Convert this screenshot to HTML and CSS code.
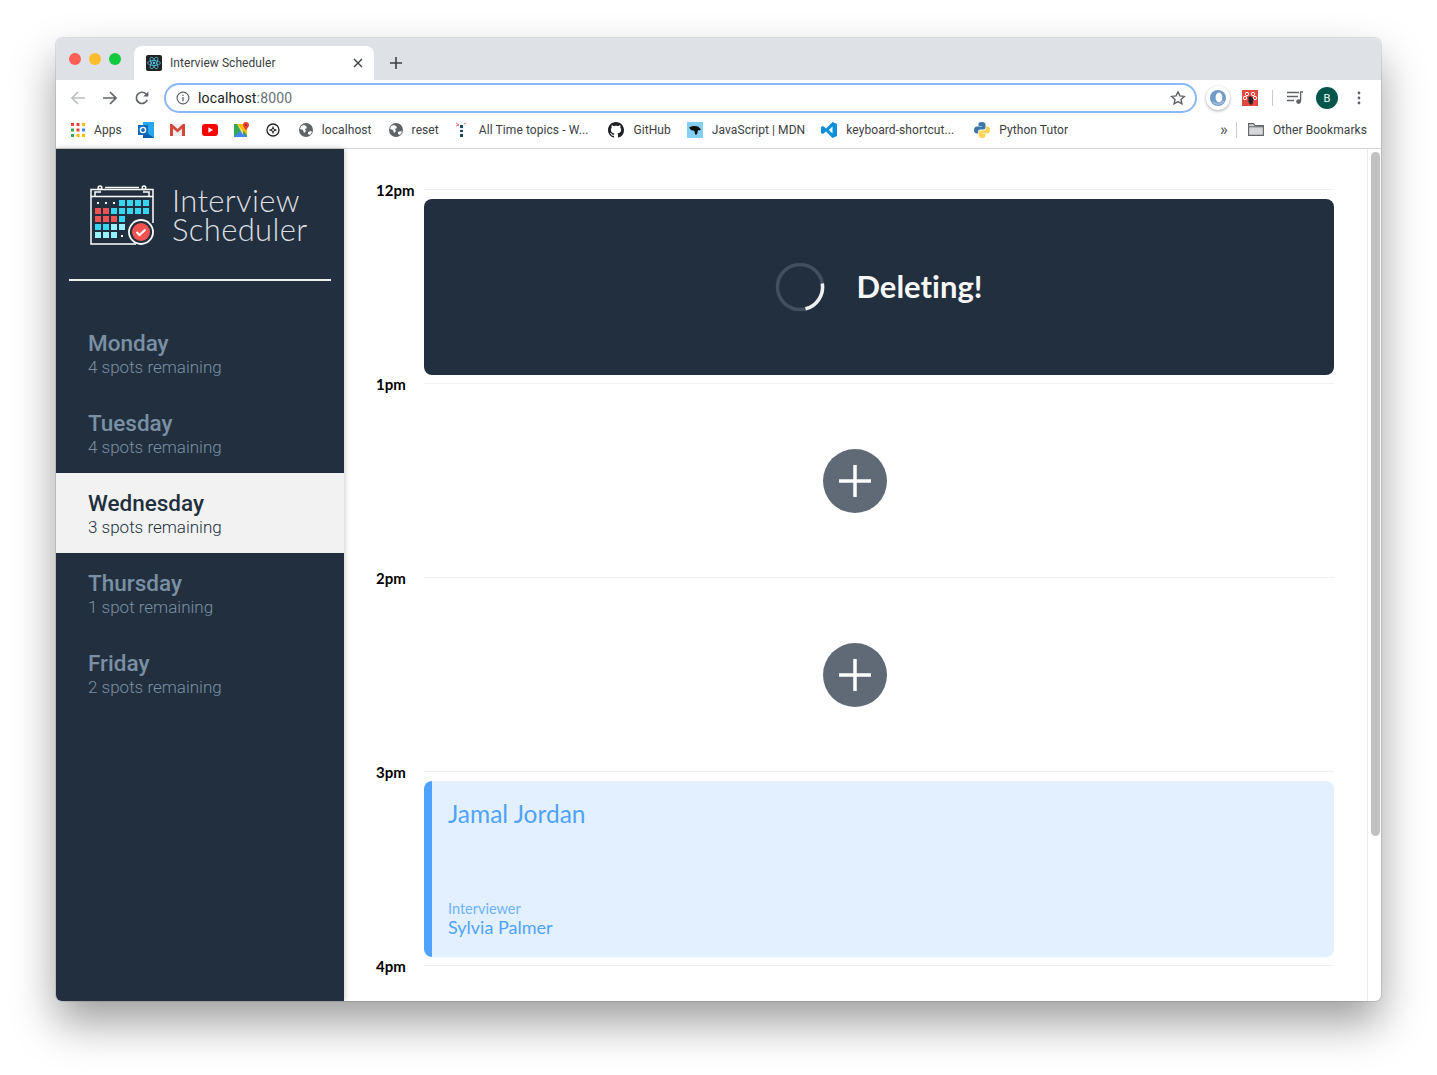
FILE: index.html
```html
<!DOCTYPE html>
<html>
  <head>
    <title>Interview Scheduler</title>
    <link rel="stylesheet" href="styles.css">
  </head>
  <body>
    <div class="window">
      <div class="tabstrip">
        <div class="lights">
          <span class="light red"></span>
          <span class="light yellow"></span>
          <span class="light green"></span>
        </div>
        <div class="tab">
          <svg class="favicon" width="16" height="16" viewBox="0 0 16 16">
            <rect width="16" height="16" rx="2" fill="#222"/>
            <g fill="none" stroke="#53c1de" stroke-width=".8">
              <ellipse cx="8" cy="8" rx="6.4" ry="2.5"/>
              <ellipse cx="8" cy="8" rx="6.4" ry="2.5" transform="rotate(60 8 8)"/>
              <ellipse cx="8" cy="8" rx="6.4" ry="2.5" transform="rotate(120 8 8)"/>
            </g>
            <circle cx="8" cy="8" r="1.3" fill="#53c1de"/>
          </svg>
          <span class="tab-title">Interview Scheduler</span>
          <svg class="tab-close" width="10" height="10" viewBox="0 0 10 10"><path d="M1 1l8 8M9 1l-8 8" stroke="#3c4043" stroke-width="1.4"/></svg>
        </div>
        <svg class="new-tab" width="12" height="12" viewBox="0 0 12 12"><path d="M6 0v12M0 6h12" stroke="#3c4043" stroke-width="1.6"/></svg>
      </div>

      <div class="toolbar">
        <svg class="nav-icon" width="16" height="16" viewBox="0 0 16 16"><path d="M15 8H2M8 2L2 8l6 6" fill="none" stroke="#bcbfc3" stroke-width="1.7"/></svg>
        <svg class="nav-icon" width="16" height="16" viewBox="0 0 16 16"><path d="M1 8h13M8 2l6 6-6 6" fill="none" stroke="#5f6368" stroke-width="1.7"/></svg>
        <svg class="nav-icon" width="16" height="16" viewBox="0 0 16 16"><path d="M13.2 9.8A5.6 5.6 0 1 1 12 4" fill="none" stroke="#5f6368" stroke-width="1.7"/><path d="M14.4 1.4v5.2H9.2z" fill="#5f6368"/></svg>
        <div class="omnibox">
          <svg width="14" height="14" viewBox="0 0 14 14"><circle cx="7" cy="7" r="5.9" fill="none" stroke="#5f6368" stroke-width="1.2"/><path d="M7 6v4.2" stroke="#5f6368" stroke-width="1.3"/><circle cx="7" cy="4.2" r=".8" fill="#5f6368"/></svg>
          <span class="url"><span class="host">localhost</span>:8000</span>
          <svg class="star" width="16" height="16" viewBox="0 0 16 16"><path d="M8 1.8l1.9 4.1 4.4.5-3.3 3 .9 4.4L8 11.6l-3.9 2.2.9-4.4-3.3-3 4.4-.5z" fill="none" stroke="#5f6368" stroke-width="1.4"/></svg>
        </div>
        <div class="ext-bubble">
          <svg width="18" height="18" viewBox="0 0 18 18"><circle cx="9" cy="9" r="8" fill="#6f9cc9"/><ellipse cx="10" cy="8.500" rx="3.400" ry="5" fill="#fff"/><path d="M4 13c3 3 8 3 11-1" fill="none" stroke="#a9c4df" stroke-width="1.500"/></svg>
        </div>
        <svg class="ext-bug" width="16" height="16" viewBox="0 0 16 16"><rect width="16" height="16" fill="#e5483f"/><g fill="none" stroke="#fff" stroke-width="1"><circle cx="5" cy="4" r="1.700"/><circle cx="11" cy="4" r="1.700"/><circle cx="3" cy="8" r="1.700"/><circle cx="13" cy="8" r="1.700"/></g><path d="M6.500 7l2-1 3 3-1 5-2 1-2-3z" fill="#222"/></svg>
        <span class="tool-sep"></span>
        <svg class="media" width="16" height="14" viewBox="0 0 16 14"><path d="M0 1.5h12M0 5.5h11M0 9.5h7" stroke="#5f6368" stroke-width="1.4"/><path d="M13.6 1v9" stroke="#5f6368" stroke-width="1.4"/><path d="M13 1h3" stroke="#5f6368" stroke-width="1.4"/><circle cx="11.6" cy="10.6" r="2.4" fill="#5f6368"/></svg>
        <span class="avatar">B</span>
        <svg class="kebab" width="4" height="14" viewBox="0 0 4 14"><circle cx="2" cy="2" r="1.4" fill="#5f6368"/><circle cx="2" cy="7" r="1.4" fill="#5f6368"/><circle cx="2" cy="12" r="1.4" fill="#5f6368"/></svg>
      </div>

      <div class="bookmarks">
        <a class="mark">
          <svg width="14" height="14" viewBox="0 0 14 14">
            <g fill="#ea4335"><rect width="3" height="3"/><rect x="5.5" width="3" height="3" /></g><rect x="11" width="3" height="3" fill="#fbbc05"/>
            <rect y="5.5" width="3" height="3" fill="#34a853"/><rect x="5.5" y="5.5" width="3" height="3" fill="#ea4335"/><rect x="11" y="5.5" width="3" height="3" fill="#4285f4"/>
            <rect y="11" width="3" height="3" fill="#34a853"/><rect x="5.5" y="11" width="3" height="3" fill="#fbbc05"/><rect x="11" y="11" width="3" height="3" fill="#fbbc05"/>
          </svg>
          Apps
        </a>
        <a class="mark icon-only">
          <svg width="16" height="16" viewBox="0 0 16 16"><rect x="5" y="0" width="11" height="16" fill="#28a8ea"/><path d="M5 8l11 8H5z" fill="#0a5ca8"/><rect y="3" width="10" height="10" fill="#0f6cbd"/><circle cx="5" cy="8" r="2.6" fill="none" stroke="#fff" stroke-width="1.4"/></svg>
        </a>
        <a class="mark icon-only">
          <svg width="15" height="13" viewBox="0 0 15 13"><rect x="1" y="1" width="13" height="12" fill="#eee"/><path d="M0 13V1h2l5.500 5L13 1h2v12h-3V5.500L7.500 9.500 3 5.500V13z" fill="#d44638"/></svg>
        </a>
        <a class="mark icon-only">
          <svg width="16" height="12" viewBox="0 0 16 12"><rect width="16" height="12" rx="3" fill="#f00"/><path d="M6.4 3.2v5.6L11 6z" fill="#fff"/></svg>
        </a>
        <a class="mark icon-only">
          <svg width="16" height="16" viewBox="0 0 16 16"><rect y="2" width="13" height="13" fill="#34a853"/><path d="M0 15L7 8l6 7z" fill="#4285f4"/><path d="M3 2h6v11z" fill="#fbdb6a"/><path d="M0 2h3l10 11v-5L9 2z" fill="#fbbc05"/><path d="M12 0a3 3 0 0 1 3 3C15 5.200 12 8 12 8S9 5.200 9 3a3 3 0 0 1 3-3z" fill="#ea4335"/><circle cx="12" cy="3" r="1" fill="#8c2a22"/></svg>
        </a>
        <a class="mark icon-only">
          <svg width="14" height="14" viewBox="0 0 14 14"><circle cx="7" cy="7" r="6" fill="none" stroke="#202124" stroke-width="1.3"/><path d="M7 3.500v7M3.500 7h7" stroke="#202124" stroke-width="1.300"/><circle cx="7" cy="7" r="1.500" fill="#fff" stroke="#202124"/></svg>
        </a>
        <a class="mark">
          <svg class="globe" viewBox="0 0 14 14"><use href="#globe"/></svg>
          localhost
        </a>
        <a class="mark">
          <svg class="globe" viewBox="0 0 14 14"><use href="#globe"/></svg>
          reset
        </a>
        <a class="mark long">
          <svg class="lighthouse" width="16" height="16" viewBox="0 0 16 16"><path d="M6 3h3v12H6z" fill="#1c4a66"/><path d="M6 6h3v2H6zM6 10h3v2H6z" fill="#e8eef2"/><path d="M2 1l3 2M2 4l3-1M10 2l2-1" stroke="#e26b6b" stroke-width="1"/></svg>
          All Time topics - W...
        </a>
        <a class="mark">
          <svg width="16" height="16" viewBox="0 0 16 16"><path fill="#202124" d="M8 0C3.580 0 0 3.580 0 8c0 3.540 2.290 6.530 5.470 7.590.4.070.55-.17.55-.38 0-.19-.01-.82-.01-1.490-2.010.37-2.530-.49-2.690-.94-.09-.23-.48-.94-.82-1.130-.28-.15-.68-.52-.01-.53.63-.01 1.080.58 1.230.82.720 1.210 1.870.870 2.330.660.070-.520.280-.870.510-1.070-1.780-.2-3.640-.89-3.640-3.950 0-.870.310-1.590.820-2.150-.080-.2-.360-1.020.080-2.120 0 0 .670-.210 2.200.820.640-.180 1.320-.270 2-.270s1.360.090 2 .270c1.530-1.040 2.200-.820 2.200-.820.440 1.100.160 1.920.080 2.120.510.560.820 1.270.820 2.150 0 3.070-1.870 3.750-3.650 3.950.290.250.540.730.540 1.480 0 1.070-.010 1.930-.010 2.200 0 .210.150.460.550.380A8.010 8.010 0 0 0 16 8c0-4.420-3.580-8-8-8z"/></svg>
          GitHub
        </a>
        <a class="mark">
          <svg width="16" height="16" viewBox="0 0 16 16"><rect width="16" height="16" fill="#83d0f2"/><path d="M2 5.500C4 4 8 3.500 11 4.500l3 3-1.500 1-1.500-.5-1 4.500H8L7.500 9 4 8z" fill="#111"/></svg>
          JavaScript | MDN
        </a>
        <a class="mark long">
          <svg width="16" height="16" viewBox="0 0 16 16"><path d="M11.500 0L16 2v12l-4.500 2L5 9.500 2 12l-2-1V5l2-1 3 2.500zM11.500 4.500L7.800 8l3.700 3.500z" fill="#0e8fdb" fill-rule="evenodd"/></svg>
          keyboard-shortcut...
        </a>
        <a class="mark">
          <svg width="16" height="16" viewBox="0 0 16 16"><path d="M8 0C5 0 4.500 1.200 4.500 2.500V4H8v.6H3C1 4.600 0 6 0 8s1 3.500 2.700 3.500H4V9.700C4 8.300 5.200 7.500 6.500 7.500h3c1.300 0 2-.9 2-2v-3C11.500 1 10 0 8 0z" fill="#3b77a8"/><path d="M8 16c3 0 3.500-1.200 3.500-2.500V12H8v-.6h5c2 0 3-1.400 3-3.400s-1-3.500-2.700-3.500H12v1.800c0 1.400-1.200 2.200-2.500 2.200h-3c-1.300 0-2 .9-2 2v3C4.500 15 6 16 8 16z" fill="#fdd55c"/></svg>
          Python Tutor
        </a>
        <span class="more">»</span>
        <span class="mark-sep"></span>
        <a class="mark other">
          <svg width="16" height="13" viewBox="0 0 16 13"><path d="M.6 12.400V.6h5l1.500 2h8.300v9.800z" fill="#d5d6d8" stroke="#5f6368" stroke-width="1.100"/><path d="M.6 3.800h14.800" stroke="#5f6368" stroke-width="1"/></svg>
          Other Bookmarks
        </a>
      </div>

      <div class="page">
        <nav class="sidebar">
          <div class="brand">
            <svg class="brand-logo" width="64" height="60" viewBox="0 0 64 60">
              <g fill="none" stroke="#fff" stroke-width="1.500">
                <path d="M46 59H1V4.500h62V38"/>
                <path d="M1 11.500h62"/>
                <path d="M5 11.500V7h6M15 2.500h34M53 7h6v4.500" />
                <circle cx="10" cy="2.800" r="1.800"/>
                <circle cx="54" cy="2.800" r="1.800"/>
                <circle cx="51" cy="47" r="12" stroke-width="1.800"/>
              </g>
              <circle cx="51" cy="47" r="9" fill="#f25352"/>
              <path d="M46.500 47l3 3 6-5.500" fill="none" stroke="#fff" stroke-width="2"/>
              <g fill="#fff"><rect x="7" y="17" width="2" height="2"/><rect x="15" y="17" width="2" height="2"/><rect x="23" y="17" width="2" height="2"/></g>
              <g fill="#37d6f2">
                <rect x="29" y="15" width="6" height="6"/><rect x="37" y="15" width="6" height="6"/><rect x="45" y="15" width="6" height="6"/><rect x="53" y="15" width="6" height="6"/>
                <rect x="21" y="23" width="6" height="6"/><rect x="29" y="23" width="6" height="6"/><rect x="37" y="23" width="6" height="6"/><rect x="45" y="23" width="6" height="6"/><rect x="53" y="23" width="6" height="6"/>
                <rect x="29" y="31" width="6" height="6"/>
                <rect x="5" y="39" width="6" height="6"/><rect x="13" y="39" width="6" height="6"/>
              </g>
              <g fill="#f25352">
                <rect x="5" y="23" width="6" height="6"/><rect x="13" y="23" width="6" height="6"/>
                <rect x="5" y="31" width="6" height="6"/><rect x="13" y="31" width="6" height="6"/><rect x="21" y="31" width="6" height="6"/>
              </g>
              <g fill="#96f2ff">
                <rect x="21" y="39" width="6" height="6"/><rect x="29" y="39" width="6" height="6"/><rect x="5" y="47" width="6" height="6"/><rect x="13" y="47" width="6" height="6"/><rect x="21" y="47" width="6" height="6"/>
              </g>
              <rect x="31" y="50" width="2" height="2" fill="#fff"/>
            </svg>
            <div class="brand-name">Interview<br>Scheduler</div>
          </div>
          <hr class="brand-rule">
          <ul class="days">
            <li class="day"><h2>Monday</h2><h3>4 spots remaining</h3></li>
            <li class="day"><h2>Tuesday</h2><h3>4 spots remaining</h3></li>
            <li class="day selected"><h2>Wednesday</h2><h3>3 spots remaining</h3></li>
            <li class="day"><h2>Thursday</h2><h3>1 spot remaining</h3></li>
            <li class="day"><h2>Friday</h2><h3>2 spots remaining</h3></li>
          </ul>
        </nav>

        <main class="schedule">
          <article class="slot">
            <div class="slot-head"><span class="time">12pm</span><hr class="slot-rule"></div>
            <div class="status">
              <svg class="spinner" width="50" height="50" viewBox="0 0 50 50">
                <circle cx="25" cy="25" r="22.500" fill="none" stroke="#424f5c" stroke-width="3.500"/>
                <path d="M47.300 21.500A22.500 22.500 0 0 1 30.500 46.800" fill="none" stroke="#f0f0f0" stroke-width="3.500"/>
              </svg>
              <h1 class="status-text">Deleting!</h1>
            </div>
          </article>
          <article class="slot">
            <div class="slot-head"><span class="time">1pm</span><hr class="slot-rule"></div>
            <div class="empty"><button class="add"><svg width="32" height="32" viewBox="0 0 32 32"><path d="M16 0v32M0 16h32" stroke="#fff" stroke-width="3.500"/></svg></button></div>
          </article>
          <article class="slot">
            <div class="slot-head"><span class="time">2pm</span><hr class="slot-rule"></div>
            <div class="empty"><button class="add"><svg width="32" height="32" viewBox="0 0 32 32"><path d="M16 0v32M0 16h32" stroke="#fff" stroke-width="3.500"/></svg></button></div>
          </article>
          <article class="slot">
            <div class="slot-head"><span class="time">3pm</span><hr class="slot-rule"></div>
            <div class="show">
              <h2 class="student">Jamal Jordan</h2>
              <div class="interviewer">
                <h4>Interviewer</h4>
                <h3>Sylvia Palmer</h3>
              </div>
            </div>
          </article>
          <article class="slot last">
            <div class="slot-head"><span class="time">4pm</span><hr class="slot-rule"></div>
          </article>
        </main>

        <div class="scrollbar"><span class="thumb"></span></div>
      </div>
    </div>

    <svg width="0" height="0" class="defs">
      <symbol id="globe" viewBox="0 0 14 14">
        <circle cx="7" cy="7" r="7" fill="#5f6368"/>
        <path d="M2 3l3-1 2 1 1 2-2 1 1 2-2 2-1-3-3-1zM9 9l3-1 1 1-2 3-2-1z" fill="#fff"/>
      </symbol>
    </svg>
  </body>
</html>
```

FILE: styles.css
```css
* {
  box-sizing: border-box;
}

html, body {
  margin: 0;
  height: 100%;
  overflow: hidden;
  background: #fff;
}

body {
  padding: 38px 56px 0;
  font-family: "Lato", sans-serif;
  font-variant-ligatures: none;
}

.defs {
  position: absolute;
}

.window {
  width: 1325px;
  height: 963px;
  border-radius: 6px;
  overflow: hidden;
  background: #fff;
  display: flex;
  flex-direction: column;
  box-shadow: 0 0 0 1px rgba(0, 0, 0, 0.1), 0 22px 44px rgba(0, 0, 0, 0.38);
}

/* browser chrome */
.tabstrip {
  height: 42px;
  flex-shrink: 0;
  background: #dee1e6;
  display: flex;
  align-items: flex-end;
}

.lights {
  display: flex;
  gap: 8px;
  padding: 15px 0 0 13px;
  align-self: flex-start;
  width: 78px;
}

.light {
  width: 12px;
  height: 12px;
  border-radius: 50%;
}

.red { background: #ff5f57; }
.yellow { background: #ffbd2e; }
.green { background: #12c940; }

.tab {
  width: 240px;
  height: 34px;
  background: #fff;
  border-radius: 8px 8px 0 0;
  display: flex;
  align-items: center;
  padding: 0 11px 0 12px;
  font-family: "Roboto", sans-serif;
  font-size: 12px;
  letter-spacing: 0.05px;
  color: #3c4043;
}

.tab-title {
  flex: 1;
  margin-left: 8px;
}

.new-tab {
  margin: 0 0 11px 16px;
}

.toolbar {
  height: 36px;
  flex-shrink: 0;
  display: flex;
  align-items: center;
  padding-left: 14px;
}

.nav-icon {
  margin-right: 16px;
}

.omnibox {
  width: 1033px;
  height: 30px;
  margin-left: -2px;
  border: 2px solid #8ab8f5;
  border-radius: 15px;
  display: flex;
  align-items: center;
  padding: 0 9px 0 10px;
  font-family: "Roboto", sans-serif;
  font-size: 14px;
  letter-spacing: 0.15px;
  color: #6b6f73;
}

.url {
  flex: 1;
  margin-left: 8px;
}

.host {
  color: #202124;
}

.ext-bubble {
  width: 24px;
  height: 24px;
  margin-left: 9px;
  border-radius: 50%;
  background: #fff;
  box-shadow: 0 1px 3px rgba(0, 0, 0, 0.35);
  display: flex;
  align-items: center;
  justify-content: center;
}

.ext-bug {
  margin-left: 12px;
}

.tool-sep {
  width: 1px;
  height: 16px;
  margin-left: 14px;
  background: #ccc;
}

.media {
  margin-left: 14px;
}

.avatar {
  width: 22px;
  height: 22px;
  margin-left: 13px;
  border-radius: 50%;
  background: #00564a;
  color: #fff;
  font-family: "Roboto", sans-serif;
  font-size: 11px;
  display: flex;
  align-items: center;
  justify-content: center;
}

.kebab {
  margin-left: 19px;
}

.bookmarks {
  height: 33px;
  flex-shrink: 0;
  border-bottom: 1px solid #d5d6d8;
  display: flex;
  align-items: center;
  padding: 0 0 5px 15px;
  font-family: "Roboto", sans-serif;
  font-size: 12px;
  letter-spacing: 0.08px;
  color: #3c4043;
  white-space: nowrap;
}

.mark {
  display: flex;
  align-items: center;
  gap: 9px;
  margin-right: 16px;
}

.mark.icon-only {
  width: 16px;
}

.mark.long {
  margin-right: 20px;
}

.globe {
  width: 14px;
  height: 14px;
  margin-left: 1px;
}

.lighthouse {
  margin-left: -1px;
}

.more {
  margin-left: auto;
  font-size: 16px;
  font-weight: 500;
  color: #5f6368;
}

.mark-sep {
  width: 1px;
  height: 16px;
  margin: 0 11px 0 8px;
  background: #ccc;
}

.mark.other {
  margin-right: 14px;
}

/* the app */
.page {
  flex: 1;
  display: flex;
  min-height: 0;
}

.sidebar {
  width: 288px;
  flex-shrink: 0;
  background: #222f3e;
  box-shadow: 0 0 6px rgba(0, 0, 0, 0.25);
  z-index: 1;
}

.brand {
  display: flex;
  align-items: center;
  gap: 18px;
  height: 130px;
  padding: 2px 0 0 34px;
}

.brand-name {
  font-weight: 300;
  font-size: 31px;
  line-height: 29px;
  letter-spacing: 0.35px;
  color: #dcdfe2;
}

.brand-rule {
  width: 262px;
  height: 2px;
  margin: 0 0 0 13px;
  border: 0;
  background: #f0f0f0;
}

.days {
  list-style: none;
  margin: 32px 0 0;
  padding: 0;
}

.day {
  height: 80px;
  padding: 17px 0 0 32px;
  color: #7b90a4;
  font-family: "Roboto", sans-serif;
}

.day h2 {
  margin: 0;
  font-size: 22.5px;
  font-weight: 500;
  line-height: 27px;
}

.day h3 {
  margin: 0;
  font-size: 17px;
  font-weight: 300;
  line-height: 20px;
}

.day.selected {
  background: #f2f2f2;
  color: #222f3e;
}

.schedule {
  flex: 1;
  min-width: 0;
  padding: 40px 33px 0 32px;
  overflow: hidden;
}

.slot {
  height: 194px;
}

.slot-head {
  display: flex;
  align-items: flex-start;
  height: 10px;
}

.time {
  width: 48px;
  flex-shrink: 0;
  font-size: 15px;
  font-weight: 700;
  line-height: 14px;
  margin-top: -6px;
  color: #000;
}

.slot-rule {
  flex: 1;
  margin: 0;
  border: 0;
  border-top: 1px solid #f0f0f0;
}

.status, .empty, .show {
  margin-left: 48px;
  height: 176px;
}

.status {
  background: #222f3e;
  border-radius: 8px;
  display: flex;
  align-items: center;
  justify-content: center;
  gap: 31px;
  padding-bottom: 1px;
}

.status-text {
  margin: 0 0 2px;
  font-size: 31px;
  font-weight: 700;
  color: #f7f7f7;
}

.empty {
  display: flex;
  align-items: center;
  justify-content: center;
  padding-right: 48px;
}

.add {
  width: 64px;
  height: 64px;
  padding: 0;
  border: 0;
  border-radius: 50%;
  background: #5f6a76;
  display: flex;
  align-items: center;
  justify-content: center;
}

.show {
  background: #e3f0ff;
  border-left: 8px solid #4fa3ff;
  border-radius: 8px;
  padding: 16px 16px 20px 16px;
  display: flex;
  flex-direction: column;
  justify-content: space-between;
  color: #4fa3ff;
}

.student {
  margin: 0;
  font-size: 24.5px;
  font-weight: 400;
  line-height: 34px;
}

.interviewer h4 {
  margin: 0;
  font-size: 14.5px;
  font-weight: 400;
  line-height: 19px;
  color: #6fb3ff;
}

.interviewer h3 {
  margin: 0;
  font-size: 18px;
  font-weight: 400;
  line-height: 19px;
}

.scrollbar {
  width: 14px;
  flex-shrink: 0;
  padding: 3px 2px 0 3px;
  border-left: 1px solid #ececec;
}

.thumb {
  display: block;
  width: 9px;
  height: 684px;
  border-radius: 5px;
  background: #c1c1c1;
}
```
